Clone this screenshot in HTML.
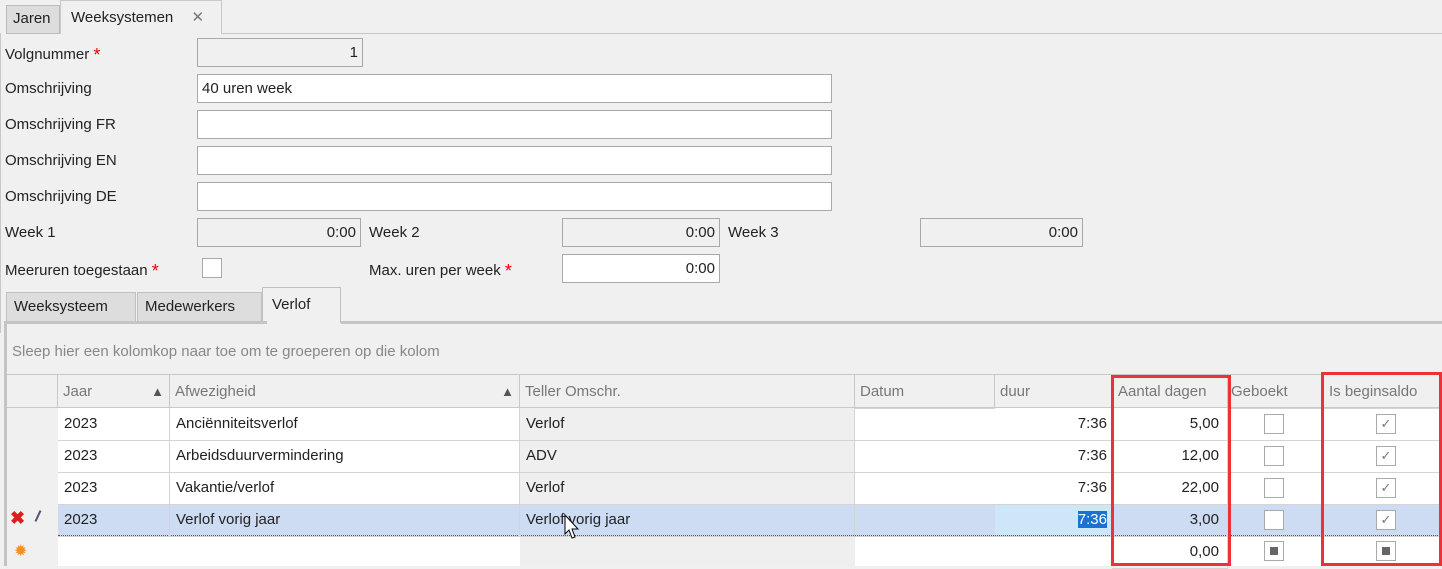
<!DOCTYPE html>
<html><head><meta charset="utf-8"><style>
*{box-sizing:border-box;margin:0;padding:0}
body{width:1442px;height:566px;background:#f0f0f0;font-family:"Liberation Sans",sans-serif;font-size:15px;color:#222;position:relative;overflow:hidden}
.a{position:absolute}
.lbl{position:absolute;left:5px}
.in{position:absolute;border:1px solid #a9a9a9;background:#fff;padding:0 4px;line-height:27px;height:29px}
.ro{background:#f0f0f0;text-align:right}
.req{color:#e00;font-size:18px;position:relative;top:2px}
.cell{position:absolute;line-height:32px;padding:0 6px;border-right:1px solid #d4d4d4;border-bottom:1px solid #d4d4d4;white-space:nowrap}
.hd{position:absolute;top:375px;height:33px;line-height:33px;padding:0 5px;color:#777;border-right:1px solid #c8c8c8;border-bottom:1px solid #c8c8c8;background:#f0f0f0;white-space:nowrap;overflow:hidden}
.cb{position:absolute;width:20px;height:20px;border:1px solid #aaa;background:#fff}
.red{position:absolute;border:3px solid #ee3038}
.ar{float:right;font-size:13px;color:#555}
</style></head><body>
<div class="a" style="left:6px;top:5px;width:54px;height:29px;background:#ddd;border:1px solid #bbb;line-height:26px;padding-left:6px">Jaren</div>
<div class="a" style="left:60px;top:0;width:162px;height:34px;background:#f0f0f0;border:1px solid #c8c8c8;border-bottom:none;line-height:34px;padding-left:10px">Weeksystemen <span style="color:#777;margin-left:14px">✕</span></div>
<div class="a" style="left:221px;top:33px;width:1221px;height:1px;background:#c8c8c8"></div>
<div class="a" style="left:0;top:33px;width:1px;height:300px;background:#c8c8c8"></div>

<div class="lbl" style="top:43px">Volgnummer <span class="req">*</span></div>
<div class="in ro" style="left:197px;top:38px;width:166px">1</div>
<div class="lbl" style="top:80px">Omschrijving</div>
<div class="in" style="left:197px;top:74px;width:635px">40 uren week</div>
<div class="lbl" style="top:116px">Omschrijving FR</div>
<div class="in" style="left:197px;top:110px;width:635px"></div>
<div class="lbl" style="top:152px">Omschrijving EN</div>
<div class="in" style="left:197px;top:146px;width:635px"></div>
<div class="lbl" style="top:188px">Omschrijving DE</div>
<div class="in" style="left:197px;top:182px;width:635px"></div>
<div class="lbl" style="top:224px">Week 1</div>
<div class="in ro" style="left:197px;top:218px;width:164px">0:00</div>
<div class="a" style="left:369px;top:224px">Week 2</div>
<div class="in ro" style="left:562px;top:218px;width:158px">0:00</div>
<div class="a" style="left:728px;top:224px">Week 3</div>
<div class="in ro" style="left:920px;top:218px;width:163px">0:00</div>
<div class="lbl" style="top:259px">Meeruren toegestaan <span class="req">*</span></div>
<div class="cb" style="left:202px;top:258px"></div>
<div class="a" style="left:369px;top:259px">Max. uren per week <span class="req">*</span></div>
<div class="in" style="left:562px;top:254px;width:158px;text-align:right">0:00</div>

<div class="a" style="left:6px;top:292px;width:130px;height:30px;background:#ddd;border:1px solid #c0c0c0;line-height:28px;padding-left:7px">Weeksysteem</div>
<div class="a" style="left:137px;top:292px;width:125px;height:30px;background:#ddd;border:1px solid #c0c0c0;line-height:28px;padding-left:7px">Medewerkers</div>
<div class="a" style="left:262px;top:287px;width:79px;height:36px;background:#f0f0f0;border:1px solid #c0c0c0;border-bottom:none;line-height:34px;padding-left:9px">Verlof</div>
<div class="a" style="left:341px;top:321px;width:1101px;height:3px;background:#c4c4c4"></div>
<div class="a" style="left:5px;top:321px;width:262px;height:3px;background:#c4c4c4"></div>
<div class="a" style="left:4px;top:321px;width:3px;height:245px;background:#c4c4c4"></div>
<div class="a" style="left:12px;top:343px;color:#888">Sleep hier een kolomkop naar toe om te groeperen op die kolom</div>
<div class="a" style="left:7px;top:374px;width:1435px;height:1px;background:#c8c8c8"></div>

<div class="hd" style="left:7px;width:51px"></div>
<div class="hd" style="left:58px;width:112px">Jaar<span class="ar">▲</span></div>
<div class="hd" style="left:170px;width:350px">Afwezigheid<span class="ar">▲</span></div>
<div class="hd" style="left:520px;width:335px">Teller Omschr.</div>
<div class="hd" style="left:855px;width:140px">Datum</div>
<div class="hd" style="left:995px;width:117px">duur</div>
<div class="hd" style="left:1112px;width:116px;padding-left:6px">Aantal dagen</div>
<div class="hd" style="left:1228px;width:94px;padding-left:3px">Geboekt</div>
<div class="hd" style="left:1322px;width:120px;padding-left:7px">Is beginsaldo</div>

<div class="a" style="left:7px;top:408px;width:51px;height:158px;background:#f0f0f0"></div>
<div class="a" style="left:58px;top:408px;width:1384px;height:158px;background:#fff"></div>
<div class="a" style="left:520px;top:408px;width:335px;height:158px;background:#efefef"></div>
<div class="a" style="left:58px;top:504px;width:1384px;height:32px;background:#cddcf3;border-top:1px dotted #555;border-bottom:1px dotted #555"></div>
<div class="a" style="left:995px;top:505px;width:117px;height:30px;background:#cde6f8"></div>

<div style="position:absolute;left:0;top:408px">
<div class="cell" style="left:58px;top:0;width:112px">2023</div><div class="cell" style="left:170px;top:0;width:350px">Anciënniteitsverlof</div><div class="cell" style="left:520px;top:0;width:335px">Verlof</div><div class="cell" style="left:855px;top:0;width:140px"></div><div class="cell" style="left:995px;top:0;width:117px;text-align:right;padding-right:4px">7:36</div><div class="cell" style="left:1112px;top:0;width:116px;text-align:right;padding-right:8px">5,00</div><div class="cell" style="left:1228px;top:0;width:94px"></div><div class="cell" style="left:1322px;top:0;width:120px"></div>
<div class="cell" style="left:58px;top:32px;width:112px">2023</div><div class="cell" style="left:170px;top:32px;width:350px">Arbeidsduurvermindering</div><div class="cell" style="left:520px;top:32px;width:335px">ADV</div><div class="cell" style="left:855px;top:32px;width:140px"></div><div class="cell" style="left:995px;top:32px;width:117px;text-align:right;padding-right:4px">7:36</div><div class="cell" style="left:1112px;top:32px;width:116px;text-align:right;padding-right:8px">12,00</div><div class="cell" style="left:1228px;top:32px;width:94px"></div><div class="cell" style="left:1322px;top:32px;width:120px"></div>
<div class="cell" style="left:58px;top:64px;width:112px">2023</div><div class="cell" style="left:170px;top:64px;width:350px">Vakantie/verlof</div><div class="cell" style="left:520px;top:64px;width:335px">Verlof</div><div class="cell" style="left:855px;top:64px;width:140px"></div><div class="cell" style="left:995px;top:64px;width:117px;text-align:right;padding-right:4px">7:36</div><div class="cell" style="left:1112px;top:64px;width:116px;text-align:right;padding-right:8px">22,00</div><div class="cell" style="left:1228px;top:64px;width:94px"></div><div class="cell" style="left:1322px;top:64px;width:120px"></div>
<div class="cell" style="left:58px;top:96px;width:112px">2023</div><div class="cell" style="left:170px;top:96px;width:350px">Verlof vorig jaar</div><div class="cell" style="left:520px;top:96px;width:335px">Verlof vorig jaar</div><div class="cell" style="left:855px;top:96px;width:140px"></div><div class="cell" style="left:995px;top:96px;width:117px;text-align:right;padding-right:4px"><span style="background:#1a73d0;color:#fff">7:36</span></div><div class="cell" style="left:1112px;top:96px;width:116px;text-align:right;padding-right:8px">3,00</div><div class="cell" style="left:1228px;top:96px;width:94px"></div><div class="cell" style="left:1322px;top:96px;width:120px"></div>
<div class="cell" style="left:58px;top:128px;width:112px"></div><div class="cell" style="left:170px;top:128px;width:350px"></div><div class="cell" style="left:520px;top:128px;width:335px"></div><div class="cell" style="left:855px;top:128px;width:140px"></div><div class="cell" style="left:995px;top:128px;width:117px"></div><div class="cell" style="left:1112px;top:128px;width:116px;text-align:right;padding-right:8px">0,00</div><div class="cell" style="left:1228px;top:128px;width:94px"></div><div class="cell" style="left:1322px;top:128px;width:120px"></div>
</div>

<div class="cb" style="left:1264px;top:414px"></div>
<div class="cb" style="left:1264px;top:446px"></div>
<div class="cb" style="left:1264px;top:478px"></div>
<div class="cb" style="left:1264px;top:510px"></div>
<div class="cb" style="left:1264px;top:541px"><div style="margin:5px;width:8px;height:8px;background:#666"></div></div>
<div class="cb" style="left:1376px;top:414px;color:#777;font-size:13px;text-align:center;line-height:18px">✓</div>
<div class="cb" style="left:1376px;top:446px;color:#777;font-size:13px;text-align:center;line-height:18px">✓</div>
<div class="cb" style="left:1376px;top:478px;color:#777;font-size:13px;text-align:center;line-height:18px">✓</div>
<div class="cb" style="left:1376px;top:510px;color:#777;font-size:13px;text-align:center;line-height:18px">✓</div>
<div class="cb" style="left:1376px;top:541px"><div style="margin:5px;width:8px;height:8px;background:#666"></div></div>

<div class="a" style="left:10px;top:508px;color:#e21b1b;font-size:18px;font-weight:bold">✖</div>
<div class="a" style="left:37px;top:510px;width:2px;height:12px;background:#557;transform:rotate(25deg)"></div>
<div class="a" style="left:14px;top:541px;color:#f39020;font-size:16px">✹</div>
<svg class="a" style="left:564px;top:514px" width="16" height="26" viewBox="0 0 16 26"><path d="M1 1 L1 20 L5 16 L8 24 L11 23 L8 15 L14 15 Z" fill="#fff" stroke="#000" stroke-width="1"/></svg>

<div class="red" style="left:1111px;top:375px;width:120px;height:191px"></div>
<div class="red" style="left:1321px;top:372px;width:121px;height:194px"></div>
</body></html>
